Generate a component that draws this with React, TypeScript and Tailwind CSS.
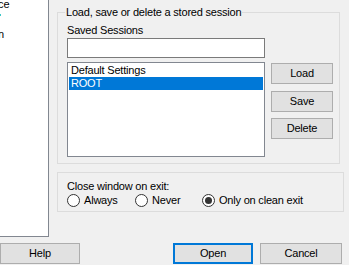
import React from "react";

const font = { fontFamily: '"Liberation Sans", Arial, sans-serif' };

function Btn({ label, cls = "" }: { label: string; cls?: string }) {
  return (
    <div
      className={`h-[21px] flex items-center justify-center bg-[#e1e1e1] border border-[#adadad] text-[11px] leading-[13px] text-black tracking-[-0.2px] ${cls}`}
    >
      {label}
    </div>
  );
}

function Radio({ label, checked = false, cls = "" }: { label: string; checked?: boolean; cls?: string }) {
  return (
    <div className={`flex items-center h-[13px] ${cls}`}>
      <div className="w-[13px] h-[13px] rounded-full border border-[#333333] bg-white flex items-center justify-center shrink-0">
        {checked && <div className="w-[7px] h-[7px] rounded-full bg-[#333333]" />}
      </div>
      <span className="ml-[4px] text-[11px] leading-[13px] tracking-[-0.2px] text-black whitespace-nowrap">{label}</span>
    </div>
  );
}

export default function App() {
  return (
    <div className="w-[349px] h-[265px] bg-[#f0f0f0] overflow-hidden text-black" style={font}>
      <div className="flex h-[237px]">
        {/* Tree */}
        <div className="w-[49px] h-[237px] bg-white border-r border-b border-[#828790] overflow-hidden relative shrink-0">
          <div className="flex flex-col mt-[-3px] text-[11px] leading-[15px] tracking-[-0.2px]">
            <div className="ml-[-48px] whitespace-nowrap">Appearance</div>
            <div className="ml-[-48px] whitespace-nowrap h-[15px] relative">
              <div className="absolute left-[48px] top-[2px] w-[1px] h-[2px] bg-[#3cc8c8]" />
            </div>
            <div className="ml-[-48px] whitespace-nowrap">Translation</div>
          </div>
        </div>

        {/* Right side */}
        <div className="ml-[8px] flex flex-col">
          {/* Group 1 */}
          <div className="relative mt-[12px] w-[283px] h-[152px] border border-[#dcdcdc] pl-[9px] pt-[11px]">
            <div className="absolute top-[-7px] left-[7px] px-[1px] bg-[#f0f0f0] text-[11px] leading-[13px] tracking-[-0.2px] whitespace-nowrap">
              Load, save or delete a stored session
            </div>
            <div className="text-[11px] leading-[13px] tracking-[-0.2px]">Saved Sessions</div>
            <div className="flex">
              <div className="flex flex-col">
                <div className="mt-[1px] w-[198px] h-[20px] bg-white border border-[#7a7a7a]" />
                <div className="mt-[4px] w-[198px] h-[95px] bg-white border border-[#828790] p-[1px] text-[11px] leading-[13px] tracking-[-0.2px]">
                  <div className="h-[13px] px-[2px]">Default Settings</div>
                  <div className="h-[13px] px-[2px] bg-[#0078d7] text-white">ROOT</div>
                </div>
              </div>
              <div className="ml-[6px] mt-[26px] w-[62px] flex flex-col">
                <Btn label="Load" />
                <Btn label="Save" cls="mt-[7px]" />
                <Btn label="Delete" cls="mt-[6px]" />
              </div>
            </div>
          </div>

          {/* Group 2 */}
          <div className="mt-[8px] w-[287px] h-[40px] border border-[#dcdcdc] pl-[9px] pt-[7px]">
            <div className="text-[11px] leading-[13px] tracking-[-0.2px]">Close window on exit:</div>
            <div className="flex mt-[1px]">
              <Radio label="Always" cls="w-[68px]" />
              <Radio label="Never" cls="w-[67px]" />
              <Radio label="Only on clean exit" checked />
            </div>
          </div>
        </div>
      </div>

      {/* Bottom buttons */}
      <div className="flex mt-[6px]">
        <Btn label="Help" cls="w-[80px]" />
        <div className="ml-[93px] w-[80px] h-[21px] flex items-center justify-center bg-[#e1e1e1] border-2 border-[#0078d7] text-[11px] leading-[13px] tracking-[-0.2px]">
          Open
        </div>
        <Btn label="Cancel" cls="ml-[7px] w-[82px]" />
      </div>
    </div>
  );
}
